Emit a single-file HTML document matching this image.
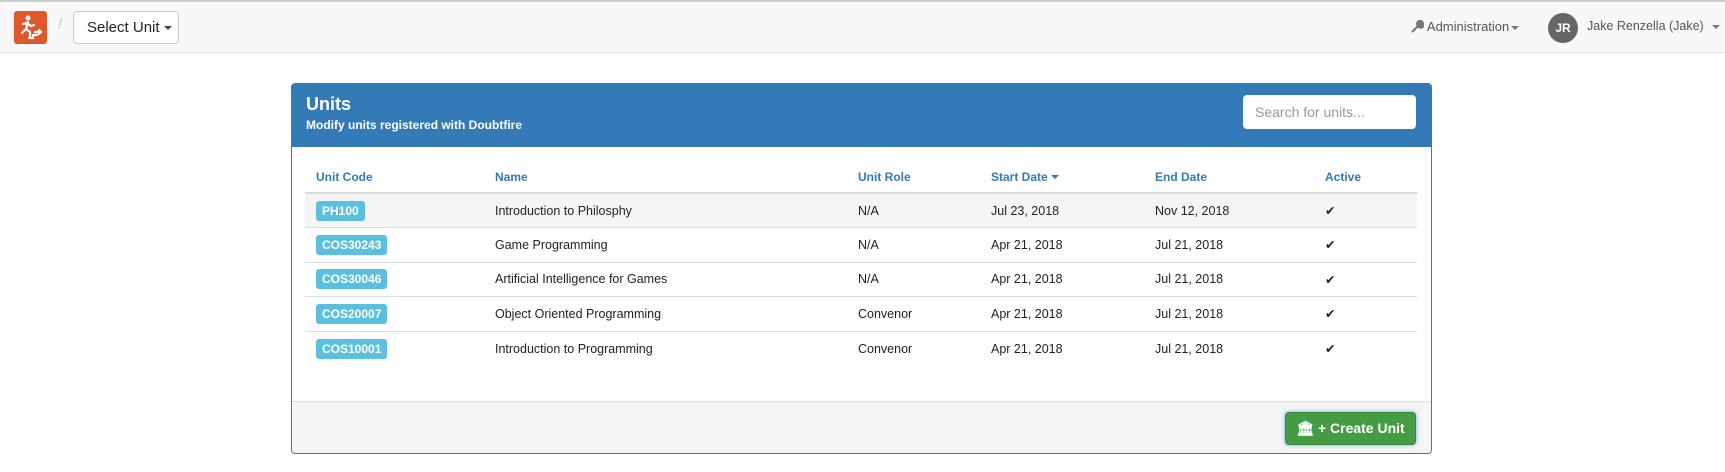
<!DOCTYPE html>
<html><head><style>
*{box-sizing:border-box;margin:0;padding:0}
body{width:1725px;height:472px;background:#fff;font-family:"Liberation Sans",sans-serif;color:#333;position:relative;overflow:hidden;font-size:13px}
.nav{position:absolute;left:0;top:0;width:1725px;height:53px;background:#f8f8f8;border-top:2px solid #ccc;border-bottom:1px solid #e3e3e3}
.logo{position:absolute;left:14px;top:9px;width:33px;height:33px;background:#e0572b;border-radius:3px}
.sel{position:absolute;left:73px;top:9px;width:106px;height:33px;border:1px solid #ccc;border-radius:4px;background:#fff;font-size:15px;line-height:31px;padding-left:13px;color:#222}
.caret{display:inline-block;border-top:4px solid #444;border-left:4px solid transparent;border-right:4px solid transparent;vertical-align:middle;margin-left:4px}
.panel{position:absolute;left:291px;top:83px;width:1141px;height:371px;border:1px solid #337ab7;border-radius:4px;overflow:hidden}
.ph{height:63px;background:#337ab7;color:#fff;position:relative}
.ph h1{position:absolute;left:14px;top:10px;font-size:18px;font-weight:bold}
.ph p{position:absolute;left:14px;top:34px;font-size:12px;font-weight:bold}
.search{position:absolute;left:951px;top:11px;width:173px;height:34px;background:#fff;border-radius:4px;color:#999;font-size:14px;line-height:34px;padding-left:12px}
table{position:absolute;left:13px;top:77px;width:1112px;border-collapse:collapse}
th{text-align:left;color:#337ab7;font-size:12px;height:32px;border-bottom:2px solid #ddd;padding-left:11px}
td{height:34.5px;border-top:1px solid #ddd;padding-left:11px;font-size:12.5px;color:#222}
tr.g td{background:#f5f5f5}
.lb{display:inline-block;background:#5bc0de;color:#fff;font-weight:bold;font-size:12px;padding:3px 6px;border-radius:3px}
.foot{position:absolute;left:0;top:317px;width:100%;height:54px;background:#f5f5f5;border-top:1px solid #ddd}
.btn{position:absolute;left:993px;top:10px;width:131px;height:33px;background:#449d44;border:1px solid #398439;border-radius:4px;color:#fff;font-size:14px;line-height:31px;text-align:center;box-shadow:0 0 4px #66afe9;font-weight:bold}
</style></head><body>
<div class="nav">
<div class="logo"><svg width="33" height="33" viewBox="0 0 33 33" fill="none" stroke="#fff" stroke-width="2.2" stroke-linecap="round"><circle cx="14" cy="7" r="2.5" fill="#fff" stroke="none"/><path d="M14 11l-2 7 4 3v6M12 18l-4 4M13 12l4 3 3-1M9 13l4-1"/><path d="M15 27h4v-3h4M21 21h6M25 19l2 2-2 2"/></svg></div>
<div style="position:absolute;left:58px;top:14px;color:#ccc;font-size:15px">/</div>
<div class="sel">Select Unit<span class="caret"></span></div>
<div style="position:absolute;left:1411px;top:17px;font-size:13px;color:#555"><svg width="13" height="13" viewBox="0 0 13 13" style="vertical-align:-2px"><path d="M1 12l6-6M7 6a3 3 0 1 0 4-4l-2 2-1-1 2-2a3 3 0 0 0-3 5" stroke="#777" stroke-width="2" fill="#777"/></svg> Administration<span class="caret" style="margin-left:2px;border-top-color:#777"></span></div>
<div style="position:absolute;left:1548px;top:11px;width:30px;height:30px;border-radius:50%;background:#666;color:#fff;font-weight:bold;font-size:12px;text-align:center;line-height:30px">JR</div>
<div style="position:absolute;left:1587px;top:17px;font-size:12.5px;color:#555">Jake Renzella (Jake)<span class="caret" style="margin-left:8px;border-top-color:#777"></span></div>
</div>
<div class="panel">
<div class="ph"><h1>Units</h1><p>Modify units registered with Doubtfire</p><div class="search">Search for units...</div></div>
<table>
<tr><th style="width:179px">Unit Code</th><th style="width:363px">Name</th><th style="width:133px">Unit Role</th><th style="width:164px">Start Date<span class="caret" style="border-top-color:#337ab7;margin-left:3px"></span></th><th style="width:170px">End Date</th><th>Active</th></tr>
<tr class="g"><td><span class="lb">PH100</span></td><td>Introduction to Philosphy</td><td>N/A</td><td>Jul 23, 2018</td><td>Nov 12, 2018</td><td>✔</td></tr>
<tr><td><span class="lb">COS30243</span></td><td>Game Programming</td><td>N/A</td><td>Apr 21, 2018</td><td>Jul 21, 2018</td><td>✔</td></tr>
<tr><td><span class="lb">COS30046</span></td><td>Artificial Intelligence for Games</td><td>N/A</td><td>Apr 21, 2018</td><td>Jul 21, 2018</td><td>✔</td></tr>
<tr><td><span class="lb">COS20007</span></td><td>Object Oriented Programming</td><td>Convenor</td><td>Apr 21, 2018</td><td>Jul 21, 2018</td><td>✔</td></tr>
<tr><td><span class="lb">COS10001</span></td><td>Introduction to Programming</td><td>Convenor</td><td>Apr 21, 2018</td><td>Jul 21, 2018</td><td>✔</td></tr>
</table>
<div class="foot"><div class="btn">🏛 + Create Unit</div></div>
</div>
</body></html>
